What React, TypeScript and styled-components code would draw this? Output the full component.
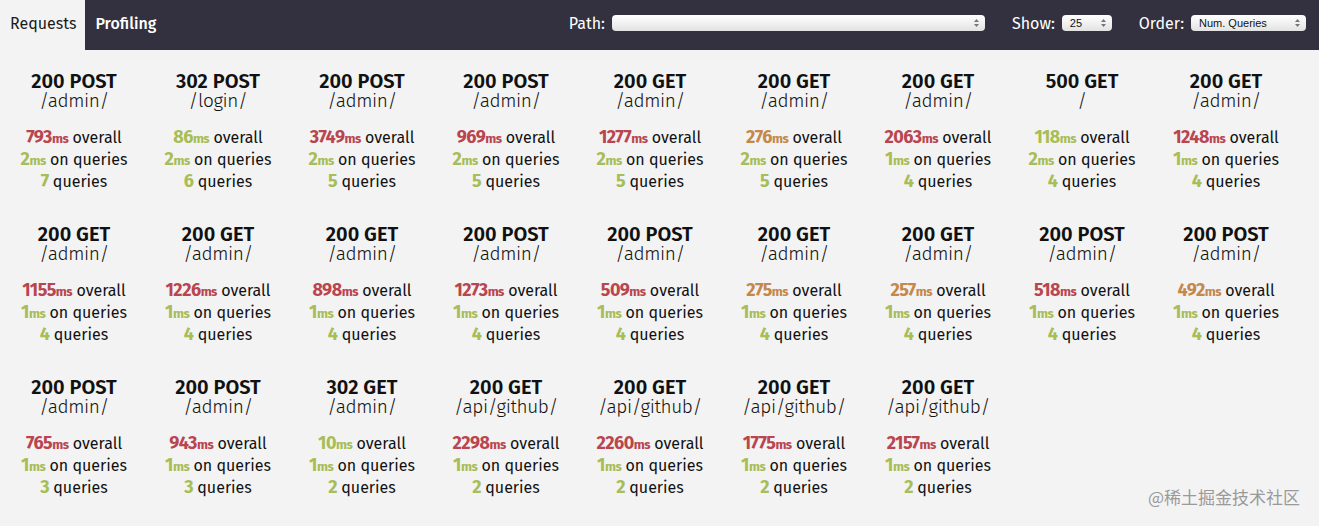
import React from "react"
import styled, { createGlobalStyle } from "styled-components"

const GlobalStyle = createGlobalStyle`
    html, body {
        margin: 0;
        padding: 0;
        background: #f3f3f3;
        font-family: "Fira Sans", "Open Sans", "Noto Sans", sans-serif;
    }
`

type Level = "bad" | "warn" | "good"

type Summary = {
    status: number
    method: string
    path: string
    overall: number
    level: Level
    queryTime: number
    queries: number
}

const levelColors: Record<Level, string> = {
    bad: "#b9454f",
    warn: "#c3884a",
    good: "#a7bd55",
}

const admin = "/admin/"
const gh = "/api/github/"

const requests: Summary[] = [
    { status: 200, method: "POST", path: admin, overall: 793, level: "bad", queryTime: 2, queries: 7 },
    { status: 302, method: "POST", path: "/login/", overall: 86, level: "good", queryTime: 2, queries: 6 },
    { status: 200, method: "POST", path: admin, overall: 3749, level: "bad", queryTime: 2, queries: 5 },
    { status: 200, method: "POST", path: admin, overall: 969, level: "bad", queryTime: 2, queries: 5 },
    { status: 200, method: "GET", path: admin, overall: 1277, level: "bad", queryTime: 2, queries: 5 },
    { status: 200, method: "GET", path: admin, overall: 276, level: "warn", queryTime: 2, queries: 5 },
    { status: 200, method: "GET", path: admin, overall: 2063, level: "bad", queryTime: 1, queries: 4 },
    { status: 500, method: "GET", path: "/", overall: 118, level: "good", queryTime: 2, queries: 4 },
    { status: 200, method: "GET", path: admin, overall: 1248, level: "bad", queryTime: 1, queries: 4 },
    { status: 200, method: "GET", path: admin, overall: 1155, level: "bad", queryTime: 1, queries: 4 },
    { status: 200, method: "GET", path: admin, overall: 1226, level: "bad", queryTime: 1, queries: 4 },
    { status: 200, method: "GET", path: admin, overall: 898, level: "bad", queryTime: 1, queries: 4 },
    { status: 200, method: "POST", path: admin, overall: 1273, level: "bad", queryTime: 1, queries: 4 },
    { status: 200, method: "POST", path: admin, overall: 509, level: "bad", queryTime: 1, queries: 4 },
    { status: 200, method: "GET", path: admin, overall: 275, level: "warn", queryTime: 1, queries: 4 },
    { status: 200, method: "GET", path: admin, overall: 257, level: "warn", queryTime: 1, queries: 4 },
    { status: 200, method: "POST", path: admin, overall: 518, level: "bad", queryTime: 1, queries: 4 },
    { status: 200, method: "POST", path: admin, overall: 492, level: "warn", queryTime: 1, queries: 4 },
    { status: 200, method: "POST", path: admin, overall: 765, level: "bad", queryTime: 1, queries: 3 },
    { status: 200, method: "POST", path: admin, overall: 943, level: "bad", queryTime: 1, queries: 3 },
    { status: 302, method: "GET", path: admin, overall: 10, level: "good", queryTime: 1, queries: 2 },
    { status: 200, method: "GET", path: gh, overall: 2298, level: "bad", queryTime: 1, queries: 2 },
    { status: 200, method: "GET", path: gh, overall: 2260, level: "bad", queryTime: 1, queries: 2 },
    { status: 200, method: "GET", path: gh, overall: 1775, level: "bad", queryTime: 1, queries: 2 },
    { status: 200, method: "GET", path: gh, overall: 2157, level: "bad", queryTime: 1, queries: 2 },
]

const Page = styled.div`
    position: relative;
    width: 1319px;
    height: 526px;
    overflow: hidden;
    background: #f3f3f3;
`

const Header = styled.div`
    display: flex;
    align-items: stretch;
    height: 50px;
    background: #33313f;
    color: #ffffff;
`

const Tab = styled.div<{ $active?: boolean }>`
    display: flex;
    align-items: center;
    padding: 0 9px 4px 10px;
    font-size: 16px;
    font-weight: ${(p) => (p.$active ? 400 : 500)};
    background: ${(p) => (p.$active ? "#f3f3f3" : "transparent")};
    color: ${(p) => (p.$active ? "#1b1b1b" : "#ffffff")};
`

const Filters = styled.div`
    margin-left: auto;
    display: flex;
    align-items: center;
    padding: 0 13px 4px 0;
    gap: 27px;
`

const Filter = styled.label`
    display: flex;
    align-items: center;
    gap: 7px;
    font-size: 16px;
`

const Select = styled.div<{ $width: number }>`
    position: relative;
    width: ${(p) => p.$width}px;
    height: 16px;
    box-sizing: border-box;
    padding: 0 16px 0 8px;
    border-radius: 4px;
    background: linear-gradient(#ffffff, #eeeeee 60%, #e2e2e2);
    color: #111;
    font-family: "Liberation Sans", Arial, sans-serif;
    font-size: 11px;
    line-height: 16px;
    white-space: nowrap;
`

const Arrows = styled.svg`
    position: absolute;
    right: 6px;
    top: 4px;
`

const Grid = styled.div`
    display: grid;
    grid-template-columns: repeat(9, 144px);
    padding: 21px 0 0 2px;
`

const Card = styled.div`
    display: flex;
    flex-direction: column;
    align-items: center;
    height: 153px;
    color: #111;
    text-align: center;
`

const Title = styled.div`
    font-size: 20px;
    font-weight: 600;
    line-height: 20px;
`

const Path = styled.div`
    font-size: 19px;
    font-weight: 300;
    line-height: 20px;
    letter-spacing: -0.4px;
    margin-bottom: 16px;
`

const Stat = styled.div`
    height: 22px;
    font-size: 16px;
    line-height: 22px;
    white-space: nowrap;
`

const Num = styled.span<{ $level: Level }>`
    color: ${(p) => levelColors[p.$level]};
    font-weight: 700;
    font-size: 18px;
    line-height: 1;
    letter-spacing: -0.5px;
`

const Unit = styled.span`
    font-size: 13px;
`

const Watermark = styled.div`
    position: absolute;
    right: 19px;
    bottom: 17px;
    color: #9a9a9a;
    font-family: "Noto Sans CJK SC", sans-serif;
    font-size: 17px;
`

function SelectBox({ width, value }: { width: number; value?: string }) {
    return (
        <Select $width={width}>
            {value}
            <Arrows width="5" height="8" viewBox="0 0 5 8">
                <path d="M2.5 0 L5 3 L0 3 Z M2.5 8 L5 5 L0 5 Z" fill="#777" />
            </Arrows>
        </Select>
    )
}

function RequestCard({ r }: { r: Summary }) {
    return (
        <Card>
            <Title>
                {r.status} {r.method}
            </Title>
            <Path>{r.path}</Path>
            <Stat>
                <Num $level={r.level}>
                    {r.overall}
                    <Unit>ms</Unit>
                </Num>{" "}
                overall
            </Stat>
            <Stat>
                <Num $level="good">
                    {r.queryTime}
                    <Unit>ms</Unit>
                </Num>{" "}
                on queries
            </Stat>
            <Stat>
                <Num $level="good">{r.queries}</Num> queries
            </Stat>
        </Card>
    )
}

export default function App() {
    return (
        <Page>
            <GlobalStyle />
            <Header>
                <Tab $active>Requests</Tab>
                <Tab>Profiling</Tab>
                <Filters>
                    <Filter>
                        Path:
                        <SelectBox width={373} />
                    </Filter>
                    <Filter>
                        Show:
                        <SelectBox width={50} value="25" />
                    </Filter>
                    <Filter>
                        Order:
                        <SelectBox width={115} value="Num. Queries" />
                    </Filter>
                </Filters>
            </Header>
            <Grid>
                {requests.map((r, i) => (
                    <RequestCard key={i} r={r} />
                ))}
            </Grid>
            <Watermark>@稀土掘金技术社区</Watermark>
        </Page>
    )
}
